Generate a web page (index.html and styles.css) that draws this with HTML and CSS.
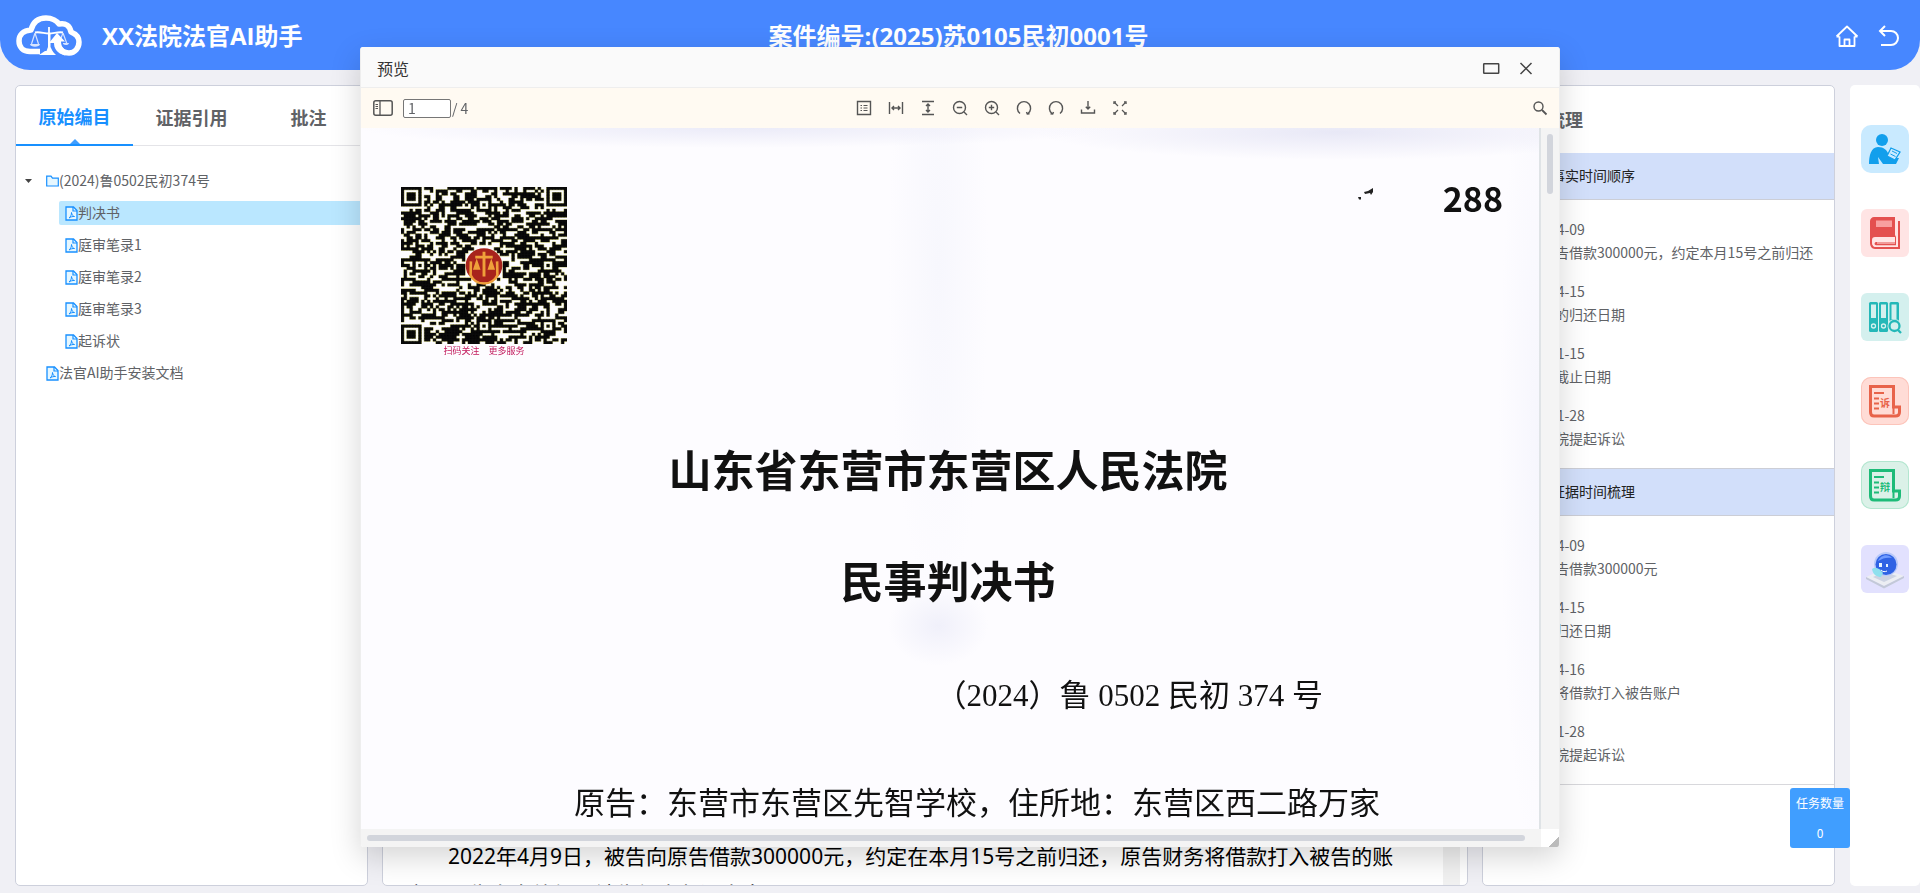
FILE: index.html
```html
<!DOCTYPE html>
<html lang="zh-CN">
<head>
<meta charset="utf-8">
<title>XX法院法官AI助手</title>
<link rel="stylesheet" href="styles.css">
</head>
<body>
<svg class="defs" aria-hidden="true">
  <symbol id="pdf" viewBox="0 0 13 15">
    <path d="M1 1h7.500l3.500 3.500V14H1z" fill="#e6f7ff" stroke="#1890ff" stroke-width="1.300"/>
    <path d="M8 1v4h4" fill="none" stroke="#1890ff" stroke-width="1.200"/>
    <path d="M4 12c1.500-1 2.500-3 2.500-5.500C6.800 9 8 10.200 9.500 10.500 7.500 10.300 5.500 11 4 12z" fill="none" stroke="#1890ff"/>
  </symbol>
</svg>

<header class="topbar">
  <div class="brand">
    <svg class="logo" viewBox="0 0 66 42" aria-hidden="true">
      <path d="M24 36.500H14C7 36.500 3 32 3 26c0-6 4-10.500 12-11C17 7 22 3 30 3c6 0 11 3 13 6 7-1.500 11 2 12 8 5 2 8 6 8 10 0 6-4 11-10 11-5 0-9-3-12-8" fill="none" stroke="#fff" stroke-width="5.500" stroke-linejoin="round"/>
      <path d="M33 12v10M19 17.500c5-1 9 1 14 1s9-2 14-1" stroke="#fff" stroke-width="1.800" fill="none"/>
      <path d="M19 18l-3.500 11M19 18l3.500 11M47 18l-2 5M47 18l4 11" stroke="#d7e4ff" stroke-width="1.200" fill="none"/>
      <path d="M14 29h10c0 3.500-10 3.500-10 0zM47 28h6c0 2-4 3-6 1z" fill="#d7e4ff"/>
      <path d="M32 18h2.500v14l4 8H29l3-8z" fill="#fff"/>
      <path d="M33 28l8-10 8 8.500h-4c0 4 2 8 7 10l-3 4c-8-2-11-7-11-12.500z" fill="#fff"/>
      <path d="M29 36l-6 4h17l-4-4z" fill="#fff"/>
    </svg>
    <h1 class="brand-name">XX法院法官AI助手</h1>
  </div>
  <h2 class="case-no">案件编号:(2025)苏0105民初0001号</h2>
  <nav class="top-actions">
    <button class="icon-btn" aria-label="首页">
      <svg width="24" height="24" viewBox="0 0 24 24" fill="none" stroke="#fff" stroke-width="1.800" stroke-linejoin="round"><path d="M4.500 12.500V22h15v-9.500M1.500 12.500L12 2.500l10.500 10M1.500 12.500h3M22.500 12.500h-3M9.500 22v-6.500h5V22"/></svg>
    </button>
    <button class="icon-btn" aria-label="返回">
      <svg width="24" height="24" viewBox="0 0 24 24" fill="none" stroke="#fff" stroke-width="2"><path d="M8 2L3 7l5 5M3 7h11a7 7 0 010 14H4"/></svg>
    </button>
  </nav>
</header>

<main class="workspace">
  <section class="panel catalog">
    <div class="tabs" role="tablist">
      <button class="tab active" role="tab" aria-selected="true">原始编目</button>
      <button class="tab" role="tab" aria-selected="false">证据引用</button>
      <button class="tab" role="tab" aria-selected="false">批注</button>
    </div>
    <ul class="tree">
      <li class="node root"><svg class="caret" viewBox="0 0 7 4" aria-hidden="true"><path d="M0 0h7L3.500 4z"/></svg><svg class="folder" viewBox="0 0 13 12" aria-hidden="true"><path d="M.7 1.200h4.300l1.500 2h5.800v7.800H.7z" fill="#e6f7ff" stroke="#1890ff" stroke-width="1.200"/></svg><span>(2024)鲁0502民初374号</span></li>
      <li class="node child selected"><svg class="doc" aria-hidden="true"><use href="#pdf"/></svg><span>判决书</span></li>
      <li class="node child"><svg class="doc" aria-hidden="true"><use href="#pdf"/></svg><span>庭审笔录1</span></li>
      <li class="node child"><svg class="doc" aria-hidden="true"><use href="#pdf"/></svg><span>庭审笔录2</span></li>
      <li class="node child"><svg class="doc" aria-hidden="true"><use href="#pdf"/></svg><span>庭审笔录3</span></li>
      <li class="node child"><svg class="doc" aria-hidden="true"><use href="#pdf"/></svg><span>起诉状</span></li>
      <li class="node leaf"><svg class="doc" aria-hidden="true"><use href="#pdf"/></svg><span>法官AI助手安装文档</span></li>
    </ul>
  </section>

  <section class="panel editor">
    <div class="editor-body">
      <p>2022年4月9日，被告向原告借款300000元，约定在本月15号之前归还，原告财务将借款打入被告的账户，原告多次催促，被告仍未归还本息。</p>
    </div>
    <div class="editor-track"></div>
  </section>

  <section class="panel timeline">
    <h2 class="timeline-title">案情梳理</h2>
    <h3 class="group-head">事实时间顺序</h3>
    <dl class="events">
      <div><dt>2022-04-09</dt><dd>其向原告借款300000元，约定本月15号之前归还</dd></div>
      <div><dt>2022-04-15</dt><dd>合同中的归还日期</dd></div>
      <div><dt>2023-11-15</dt><dd>借款的截止日期</dd></div>
      <div><dt>2023-11-28</dt><dd>前往法院提起诉讼</dd></div>
    </dl>
    <h3 class="group-head later">证据时间梳理</h3>
    <dl class="events last">
      <div><dt>2022-04-09</dt><dd>其向原告借款300000元</dd></div>
      <div><dt>2022-04-15</dt><dd>约定的归还日期</dd></div>
      <div><dt>2022-04-16</dt><dd>原告方将借款打入被告账户</dd></div>
      <div><dt>2023-11-28</dt><dd>前往法院提起诉讼</dd></div>
    </dl>
  </section>

  <aside class="tools">
    <button class="tool blue" aria-label="阅卷">
      <svg viewBox="0 0 48 48"><circle cx="21" cy="15" r="6" fill="#129fec"/><path d="M8 39c0-8 2-17 9-17 6 0 9 3 11 8l3 3h7l-3 6H22l-5-7 1 7z" fill="#129fec"/><path d="M30 23l9 4-5 8-8-4z" fill="#c9eaff" stroke="#129fec" stroke-width="1.300"/><path d="M31 26l5 2.500M29.500 29l5 2.500" stroke="#129fec"/></svg>
    </button>
    <button class="tool red" aria-label="法律法规">
      <svg viewBox="0 0 48 48"><path d="M13 8h21v20H14c-2 0-3 1-3 3 0 4 1 7 4 7h22V12h2v28H14c-3 0-5-3-5-6V12c0-2 2-4 4-4z" fill="#e4504f"/><path d="M34 26v7H15c-2 0-2 4 0 4h20V28" fill="#e4504f"/><path d="M15 30.500h19M15 37.200h20M15 30.500c-4 0-4 6.700 0 6.700" stroke="#ffe4e4" stroke-width="1.800" fill="none"/><path d="M16 34h18" stroke="#ffe4e4" stroke-width="1"/><path d="M15 11.500h16v6.500H15z" fill="#f8a0a0"/></svg>
    </button>
    <button class="tool teal" aria-label="类案检索">
      <svg viewBox="0 0 48 48"><g fill="#24b8b8"><rect x="8" y="9" width="9" height="30" rx="1.500"/><rect x="18" y="9" width="9" height="30" rx="1.500"/><rect x="28.500" y="9" width="9.500" height="20" rx="1.500"/></g><g fill="#d4f0ee"><path d="M10 11.500h5V25h-5zM20 11.500h5V25h-5zM30.500 11.500h5V26h-5z"/></g><g fill="none" stroke="#d4f0ee" stroke-width="1.300"><circle cx="12.500" cy="33" r="2"/><circle cx="22.500" cy="33" r="2"/></g><circle cx="33.500" cy="33" r="7" fill="#d4f0ee"/><circle cx="33.500" cy="33" r="5" fill="none" stroke="#24b8b8" stroke-width="2.300"/><path d="M37 37l3 3" stroke="#24b8b8" stroke-width="2.300"/></svg>
    </button>
    <button class="tool coral" aria-label="诉状">
      <svg viewBox="0 0 48 48"><path d="M9.500 9.500h23V30h6v5c0 3-2 4-4 4H13c-2.500 0-3.500-1-3.500-4z" fill="none" stroke="#e8634a" stroke-width="3"/><path d="M32.500 29v8" stroke="#e8634a" stroke-width="2"/><path d="M13 16h10M13 21.500h5M13 26.500h5M13 31.500h5" stroke="#e8634a" stroke-width="1.800"/><text x="19" y="30" font-size="10" font-weight="700" fill="#e8634a">诉</text></svg>
    </button>
    <button class="tool green" aria-label="答辩状">
      <svg viewBox="0 0 48 48"><path d="M9.500 9.500h23V30h6v5c0 3-2 4-4 4H13c-2.500 0-3.500-1-3.500-4z" fill="none" stroke="#1dbb78" stroke-width="3"/><path d="M32.500 29v8" stroke="#1dbb78" stroke-width="2"/><path d="M13 16h10M13 21.500h5M13 26.500h5M13 31.500h5" stroke="#1dbb78" stroke-width="1.800"/><text x="19" y="30" font-size="10" font-weight="700" fill="#1dbb78">辩</text></svg>
    </button>
    <button class="tool violet" aria-label="智能助手">
      <svg viewBox="0 0 48 48"><path d="M5 32l18-8 20 7-20 10z" fill="#eceef3"/><path d="M5 32l18 9 20-10v2L23 43.500 5 34z" fill="#c3c9d8"/><path d="M12 32l11-5 13 4-13 6z" fill="#cdd3e2"/><circle cx="25" cy="19" r="12" fill="#b9c9f8"/><circle cx="25" cy="19.500" r="10.500" fill="#2f62e4"/><path d="M17 16c2-6 10-8 14-3-5-1-9 0-14 3z" fill="#6f9bff"/><path d="M18 18h3v4h-3zM25 19h2v3h-2z" fill="#e8f4ff"/><path d="M20 25c2 2 4 2 6 1" stroke="#fff" fill="none"/><path d="M11 24c4-3 8 0 11 4l-2 4c-4 0-8-2-9-8z" fill="#8fe0ee"/></svg>
    </button>
  </aside>
</main>

<div class="task-count"><span>任务数量</span><span>0</span></div>

<div class="dialog" role="dialog" aria-label="预览">
  <div class="dialog-head">
    <span class="dialog-title">预览</span>
    <button class="icon-btn" aria-label="最大化"><svg width="18" height="18" viewBox="0 0 18 18" fill="none" stroke="#444" stroke-width="1.500"><rect x="1.700" y="4.700" width="15" height="9.500" rx=".5"/></svg></button>
    <button class="icon-btn" aria-label="关闭"><svg width="18" height="18" viewBox="0 0 18 18" stroke="#444" stroke-width="1.500"><path d="M3.500 4l11 11M14.500 4l-11 11"/></svg></button>
  </div>
  <div class="toolbar">
    <div class="page-nav">
      <button class="icon-btn" aria-label="侧栏"><svg width="20" height="16" viewBox="0 0 20 16" fill="none" stroke="#555"><rect x=".8" y=".8" width="18.400" height="14.400" rx="2" stroke-width="1.500"/><path d="M7 1v14" stroke-width="1.300"/><path d="M2.500 4.500H5M2.500 6.500H5M2.500 8.500H5"/></svg></button>
      <input class="page-input" type="text" value="1" aria-label="页码"><span>/ 4</span>
    </div>
    <div class="view-tools">
      <button class="icon-btn" aria-label="目录"><svg viewBox="0 0 16 16"><path d="M1.500 1.500h13v13h-13z"/><path d="M4.500 5.500H6M4.500 8H6M4.500 10.500H6M7.500 5.500h4M7.500 8h4M7.500 10.500h4" stroke-width="1"/></svg></button>
      <button class="icon-btn" aria-label="适合宽度"><svg viewBox="0 0 16 16"><path d="M1.500 2v12M14.500 2v12M4 8h8M6 6L4 8l2 2M10 6l2 2-2 2"/></svg></button>
      <button class="icon-btn" aria-label="适合高度"><svg viewBox="0 0 16 16"><path d="M2 1.500h12M2 14.500h12M8 4v8M6 6l2-2 2 2M6 10l2 2 2-2"/></svg></button>
      <button class="icon-btn" aria-label="缩小"><svg viewBox="0 0 16 16"><circle cx="7.500" cy="7.500" r="6"/><path d="M12 12l3 3M4.800 7.500h5.400"/></svg></button>
      <button class="icon-btn" aria-label="放大"><svg viewBox="0 0 16 16"><circle cx="7.500" cy="7.500" r="6"/><path d="M12 12l3 3M4.800 7.500h5.400M7.500 4.800v5.400"/></svg></button>
      <button class="icon-btn" aria-label="顺时针旋转"><svg viewBox="0 0 16 16"><path d="M4 13.500a6.600 6.600 0 118 0M10.500 12l.8 2 2.200-.3"/></svg></button>
      <button class="icon-btn" aria-label="逆时针旋转"><svg viewBox="0 0 16 16"><path d="M12 13.500a6.600 6.600 0 10-8 0M5.500 12l-.8 2-2.200-.3"/></svg></button>
      <button class="icon-btn" aria-label="下载"><svg viewBox="0 0 16 16"><path d="M1.500 9.500v3.500h13V9.500M8 1v8M5.800 6.800L8 9l2.200-2.200"/></svg></button>
      <button class="icon-btn" aria-label="全屏"><svg viewBox="0 0 16 16"><path d="M2.500 2.500l3.500 3.500M13.500 2.500L10 6M2.500 13.500L6 10M13.500 13.500L10 10" stroke-width="1.200"/><path d="M2 4V2h2M12 2h2v2M2 12v2h2M14 12v2h-2"/></svg></button>
    </div>
    <button class="icon-btn find" aria-label="查找"><svg viewBox="0 0 16 16"><circle cx="6.500" cy="6.500" r="4.500"/><path d="M10 10l4.500 4.500" stroke-width="1.800"/></svg></button>
  </div>
  <div class="viewer">
    <article class="paper">
      <div class="paper-top">
        <figure class="qr">
          <svg id="qr" viewBox="0 0 57 57" preserveAspectRatio="none" role="img" aria-label="二维码"></svg>
          <figcaption>扫码关注　更多服务</figcaption>
        </figure>
        <div class="stamp">
          <svg width="18" height="14" viewBox="0 0 18 14" aria-hidden="true"><path d="M1 10h3v2.500H2zM7 5l4-1 5-3v4l-2 3-1-2-5 1z" fill="#222"/></svg>
          <span>288</span>
        </div>
      </div>
      <h2 class="court">山东省东营市东营区人民法院</h2>
      <h2 class="doc-type">民事判决书</h2>
      <p class="doc-no">（2024）鲁 0502 民初 374 号</p>
      <p class="party">原告：东营市东营区先智学校，住所地：东营区西二路万家</p>
    </article>
    <div class="v-track"><div class="v-thumb"></div></div>
    <div class="h-track"><div class="h-thumb"></div></div>
    <div class="corner"></div>
  </div>
</div>
<script src="qr.js"></script>
</body>
</html>
```

FILE: qr.js
```js
(function () {
  var N = 57, seed = 20240374, d = "", last = false;
  function rnd() {
    seed = (seed * 48271) % 2147483647;
    return seed / 2147483647;
  }
  function ring(x, y, cx, cy) {
    return Math.max(Math.abs(x - cx), Math.abs(y - cy));
  }
  var finders = [[3, 3], [53, 3], [3, 53]];
  var aligns = [[28, 6], [6, 28], [50, 28], [28, 50], [50, 50]];
  function cell(x, y) {
    var i, r;
    last = rnd() < (last ? 0.66 : 0.44);
    for (i = 0; i < finders.length; i++) {
      r = ring(x, y, finders[i][0], finders[i][1]);
      if (r <= 4) return r === 3 || r < 2;
    }
    for (i = 0; i < aligns.length; i++) {
      r = ring(x, y, aligns[i][0], aligns[i][1]);
      if (r <= 2) return r !== 1;
    }
    if (Math.hypot(x - 28, y - 28) < 7) return false;
    return last;
  }
  for (var y = 0; y < N; y++) {
    for (var x = 0; x < N; x++) {
      if (cell(x, y)) d += "M" + x + " " + y + "h1v1h-1z";
    }
  }
  document.getElementById("qr").innerHTML =
    '<path d="' + d + '" fill="none" stroke="#f4f2a0" stroke-width=".4"/>' +
    '<path d="' + d + '" fill="#0b0b0b" stroke="#0b0b0b" stroke-width=".1"/>' +
    '<circle cx="28.500" cy="28.500" r="6.300" fill="#a8241c"/>' +
    '<g fill="none" stroke="#efa03a"><path d="M28.500 23.500v9M25.500 25.500h6" stroke-width="1"/>' +
    '<path d="M24 27l-.1 5a5 5 0 009.200 0L33 27" stroke-width=".9"/></g>' +
    '<path d="M26 26l-1.300 4h2.600zM31 26l-1.300 4h2.600z" fill="#efa03a"/>';
})();
```

FILE: styles.css
```css
* { box-sizing: border-box; }
body {
  margin: 0;
  height: 100vh;
  display: flex;
  flex-direction: column;
  background: #f0f0f5;
  color: #606266;
  font: 14px/24px "Noto Sans CJK SC", sans-serif;
  overflow: hidden;
}
h1, h2, h3, p, ul, dl, dd, figure { margin: 0; padding: 0; }
button { font: inherit; color: inherit; border: 0; padding: 0; background: none; cursor: pointer; }
.defs { position: absolute; width: 0; height: 0; }
.icon-btn { display: inline-flex; align-items: center; justify-content: center; }

.topbar {
  flex: none;
  height: 70px;
  display: grid;
  grid-template-columns: 1fr auto 1fr;
  align-items: center;
  padding: 2px 19px 0 16px;
  background: #4787ff;
  border-radius: 0 0 30px 30px;
  color: #fff;
}
.brand { display: flex; align-items: center; gap: 20px; }
.logo { width: 66px; height: 42px; }
.brand-name, .case-no { font: 700 24px/32px "Open Sans", "Noto Sans CJK SC", sans-serif; }
.top-actions { display: flex; justify-content: flex-end; gap: 18px; }

.workspace {
  flex: 1;
  min-height: 0;
  display: grid;
  grid-template-columns: minmax(0, 353fr) minmax(0, 1086fr) minmax(0, 353fr) 71px;
  gap: 14px;
  padding: 15px 0 7px 15px;
}
.panel {
  background: #fff;
  border: 1px solid #cdd0dc;
  border-radius: 5px;
  overflow: hidden;
  min-height: 0;
}

.tabs { display: grid; grid-template-columns: repeat(3, 1fr); height: 60px; border-bottom: 1px solid #e4e4e8; }
.tab { position: relative; height: 60px; padding-top: 2px; font-size: 18px; font-weight: 700; }
.tab.active { color: #1890ff; border-bottom: 2px solid #1890ff; }
.tab.active::after {
  content: "";
  position: absolute;
  left: 50%;
  bottom: 0;
  margin-left: -5px;
  border: 5px solid transparent;
  border-top: 0;
  border-bottom-color: #409eff;
}
.tree { list-style: none; padding: 23px 0 0 9px; display: flex; flex-direction: column; gap: 8px; line-height: 22px; }
.node { display: flex; align-items: center; height: 24px; }
.node span { height: 24px; }
.caret { width: 7px; height: 4px; fill: #444; margin-right: 14px; }
.folder { width: 13px; height: 12px; }
.doc { width: 13px; height: 15px; flex: none; }
.child { margin-left: 34px; padding-left: 6px; border-radius: 2px; }
.selected { background: #bae7ff; }
.leaf { padding-left: 21px; }

.editor { display: flex; padding-right: 7px; }
.editor-body {
  flex: 1;
  display: flex;
  flex-direction: column;
  justify-content: flex-end;
  margin-bottom: -28px;
  padding: 0 30px 0 23px;
  color: #000;
  font: 21px/38px "Noto Sans", "Noto Sans CJK SC", sans-serif;
}
.editor-body p { text-indent: 2em; }
.editor-track { width: 17px; background: #f1f1f1; }

.timeline-title { font-size: 18px; line-height: 67px; padding-left: 28px; font-weight: 700; }
.group-head {
  height: 47px;
  padding-left: 68px;
  background: #d2dffa;
  border-bottom: 1px solid #ccced6;
  color: #222;
  font-size: 14px;
  line-height: 45px;
  font-weight: 400;
}
.group-head.later { height: 48px; border-top: 1px solid #ccced6; }
.events { display: flex; flex-direction: column; gap: 16px; padding: 18px 0 18px 30px; line-height: 23px; white-space: nowrap; }
.events.last { border-bottom: 1px solid #d8d8dc; }

.tools { display: flex; flex-direction: column; align-items: center; gap: 36px; margin-left: 1px; padding-top: 40px; background: #fff; border-radius: 5px; }
.tool { width: 48px; height: 48px; border-radius: 6px; overflow: hidden; }
.tool svg { display: block; width: 100%; height: 100%; }
.blue { background: #c9eaff; border-radius: 10px; }
.red { background: #ffe4e4; }
.teal { background: #d4f0ee; }
.coral { background: #ffdcd6; border-radius: 10px; box-shadow: inset 0 0 0 1px #fcc4ba; }
.green { background: #dbf1e8; border-radius: 10px; box-shadow: inset 0 0 0 1px #b2e6cf; }
.violet { background: #e2e1fe; }

.task-count {
  position: fixed;
  right: 70px;
  bottom: 45px;
  width: 60px;
  height: 60px;
  display: flex;
  flex-direction: column;
  align-items: center;
  justify-content: space-between;
  padding: 3px 0;
  background: #409eff;
  border-radius: 3px;
  color: #fff;
  font-size: 12px;
}

.dialog {
  position: fixed;
  inset: 47px 18.75vw 46px;
  display: flex;
  flex-direction: column;
  background: #fff;
  border: 0 solid #eee;
  border-width: 0 1px;
  border-radius: 3px;
  box-shadow: 0 10px 30px rgba(0, 0, 0, .17);
  overflow: hidden;
}
.dialog-head { flex: none; display: flex; align-items: center; gap: 17px; height: 41px; padding: 2px 24px 0 16px; background: #fafafa; border-bottom: 1px solid #eee; color: #333; }
.dialog-title { flex: 1; font-size: 16px; }
.toolbar { flex: none; display: grid; grid-template-columns: 1fr auto 1fr; align-items: center; height: 40px; padding: 0 11px 0 12px; background: #fffaf2; }
.page-nav { display: flex; align-items: center; }
.page-input {
  width: 48px;
  height: 19px;
  margin: 0 1px 0 10px;
  padding: 0 4px;
  border: 1px solid #767676;
  border-radius: 2px;
  background: #fff;
  color: inherit;
  font: inherit;
}
.view-tools { display: flex; gap: 16px; padding-left: 62px; }
.view-tools svg, .find svg { width: 16px; height: 16px; fill: none; stroke: #555; stroke-width: 1.4; }
.find { justify-self: end; }

.viewer { flex: 1; min-height: 0; display: grid; grid-template: minmax(0, 1fr) 18px / minmax(0, 1fr) 18px; }
.paper {
  overflow: hidden;
  padding: 59px 40px 0;
  border-right: 2px solid #dfe3e6;
  background:
    radial-gradient(ellipse 380px 20px at 32% 0, #ebebf8, transparent),
    radial-gradient(ellipse 300px 28px at 83% 4px, #e8e8f6, transparent),
    radial-gradient(ellipse 50px 340px at 49% 20%, #f7f7fd, transparent),
    radial-gradient(ellipse 50px 40px at 49% 71%, #f0f0fa, transparent),
    radial-gradient(ellipse 40px 420px at 100% 45%, #f6f6fd, transparent),
    #fdfcff;
  color: #111;
  font-family: "Liberation Serif", "Noto Sans CJK SC", serif;
}
.paper-top { display: flex; justify-content: space-between; align-items: flex-start; }
.qr { width: 166px; }
.qr svg { display: block; width: 166px; height: 157px; }
.qr figcaption { font-size: 9px; line-height: 15px; text-align: center; color: #c2185b; }
.stamp { display: flex; gap: 68px; margin-right: -4px; font: 700 34px/22px "Noto Sans CJK SC", sans-serif; }
.court, .doc-type { font-size: 43px; line-height: 60px; font-weight: 700; text-align: center; white-space: nowrap; padding-right: 4px; }
.court { margin-top: 84px; }
.doc-type { margin-top: 51px; }
.doc-no, .party { font-size: 31px; line-height: 48px; white-space: nowrap; }
.doc-no { margin-top: 58px; padding-right: 176px; text-align: right; }
.party { margin-top: 60px; text-align: center; padding-left: 54px; }
.v-track, .h-track { background: #f4f4f4; }
.v-track { padding: 6px; }
.v-thumb { width: 6px; height: 60px; border-radius: 3px; background: #d2d5dc; }
.h-track { padding: 6px 16px 6px 6px; }
.h-thumb { height: 6px; border-radius: 3px; background: #d2d5dc; }
.corner { background: linear-gradient(135deg, transparent 72%, #bbb 72%) #fff; }
```
